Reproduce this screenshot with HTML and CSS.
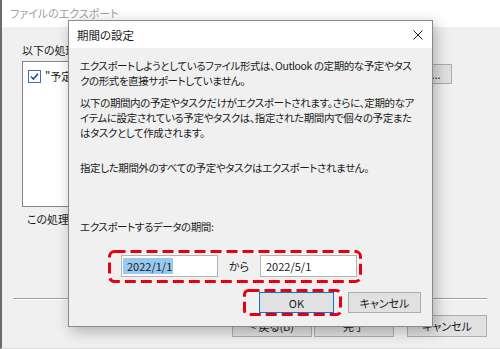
FILE: index.html
```html
<!DOCTYPE html>
<html lang="ja">
<head>
    <meta charset="UTF-8">
    <meta name="viewport" content="width=device-width, initial-scale=1.0">
    <title>期間の設定</title>
    <link rel="stylesheet" href="styles.css">
</head>
<body>
    <div class="window">
        <div class="win-title">ファイルのエクスポート</div>
        <div class="win-body">
            <div class="win-label">以下の処理</div>
            <div class="list-row">
                <div class="listbox">
                    <div class="list-item">
                        <svg class="check" width="13" height="13" viewBox="0 0 13 13">
                            <rect x="0.5" y="0.5" width="12" height="12" fill="#fff" stroke="#3c6fb8"/>
                            <path d="M3 6.5 L5.4 9 L10 3.8" fill="none" stroke="#1f4f96" stroke-width="1.6"/>
                        </svg>
                        <span>"予定表</span>
                    </div>
                </div>
                <button class="win-btn small">...</button>
            </div>
            <div class="win-note">この処理に</div>
            <div class="win-sep"></div>
            <div class="win-buttons">
                <button class="win-btn">&lt; 戻る(B)</button>
                <button class="win-btn">完了</button>
                <button class="win-btn cancel">キャンセル</button>
            </div>
        </div>
    </div>

    <div class="dialog">
        <div class="dlg-title">
            <span>期間の設定</span>
            <svg class="close" width="10" height="10" viewBox="0 0 10 10">
                <path d="M0.5 0.5 L9.5 9.5 M9.5 0.5 L0.5 9.5" stroke="#222" stroke-width="1"/>
            </svg>
        </div>
        <div class="dlg-body">
            <p class="msg">エクスポートしようとしているファイル形式は、Outlook の定期的な予定やタス<br>クの形式を直接サポートしていません。</p>
            <p class="msg second">以下の期間内の予定やタスクだけがエクスポートされます。さらに、定期的なア<br>イテムに設定されている予定やタスクは、指定された期間内で個々の予定また<br>はタスクとして作成されます。</p>
            <p class="msg third">指定した期間外のすべての予定やタスクはエクスポートされません。</p>
            <p class="msg range-label">エクスポートするデータの期間:</p>
            <div class="range-row">
                <div class="textbox"><span class="sel">2022/1/1</span></div>
                <span class="kara">から</span>
                <div class="textbox"><span class="val">2022/5/1</span></div>
                <svg class="mark mark-range" width="254" height="33" viewBox="0 0 254 33">
                    <rect x="1.5" y="1.5" width="251" height="30" rx="5" fill="none" stroke="#e60012" stroke-width="3" stroke-dasharray="11 5"/>
                </svg>
            </div>
            <div class="dlg-buttons">
                <span class="ok-wrap">
                    <button class="dlg-btn ok">OK</button>
                    <svg class="mark mark-ok" width="99" height="27" viewBox="0 0 99 27">
                        <rect x="1.5" y="1.5" width="96" height="24" rx="4" fill="none" stroke="#e60012" stroke-width="3" stroke-dasharray="11 5"/>
                    </svg>
                </span>
                <button class="dlg-btn">キャンセル</button>
            </div>
        </div>
    </div>
</body>
</html>
```

FILE: styles.css
```css
body {
    margin: 0;
    width: 500px;
    height: 349px;
    overflow: hidden;
    position: relative;
    font-family: "Noto Sans CJK JP", sans-serif;
    font-feature-settings: "palt";
    font-size: 11px;
    color: #1a1a1a;
}
button {
    font-family: inherit;
    font-feature-settings: "palt";
    font-size: 11px;
    color: #1a1a1a;
    padding: 0;
    cursor: default;
}
.window {
    height: 349px;
    box-sizing: border-box;
    border-left: 2px solid #6b6b6b;
    border-bottom: 1px solid #dcdcdc;
    background-color: #f0f0f0;
    display: flex;
    flex-direction: column;
}
.win-title {
    height: 27px;
    line-height: 27px;
    padding-left: 8px;
    background-color: #fff;
    color: #a0a0a0;
}
.win-body {
    flex: 1;
    padding: 16px 13px 0 11px;
}
.win-label {
    margin-left: 9px;
    line-height: 15px;
    white-space: nowrap;
}
.list-row {
    display: flex;
    gap: 8px;
    margin-top: 3px;
    padding-right: 35px;
}
.listbox {
    flex: 1;
    height: 146px;
    margin-left: 9px;
    background-color: #fff;
    border: 1px solid #828790;
    box-sizing: border-box;
}
.list-item {
    display: flex;
    align-items: center;
    gap: 4px;
    padding: 6px 0 0 5px;
    white-space: nowrap;
}
.check {
    display: block;
}
.win-btn {
    width: 80px;
    height: 22px;
    background-color: #e1e1e1;
    border: 1px solid #adadad;
}
.win-btn.small {
    width: 32px;
    height: 20px;
    margin-top: 3px;
}
.win-note {
    margin: 5px 0 0 14px;
    line-height: 15px;
    white-space: nowrap;
}
.win-sep {
    margin-top: 71px;
    border-top: 1px solid #a0a0a0;
    border-bottom: 1px solid #fff;
}
.win-buttons {
    display: flex;
    justify-content: flex-end;
    gap: 2px;
    margin-top: 15px;
}
.win-btn.cancel {
    margin-left: 11px;
}

.dialog {
    position: absolute;
    left: 68px;
    top: 20px;
    width: 365px;
    height: 307px;
    box-sizing: border-box;
    border: 1px solid #8a8a8a;
    background-color: #f0f0f0;
    box-shadow: 3px 4px 14px rgba(0, 0, 0, 0.28);
}
.dlg-title {
    height: 27px;
    display: flex;
    align-items: center;
    justify-content: space-between;
    padding: 0 9px 0 8px;
    background-color: #fff;
    font-size: 11.5px;
}
.close {
    display: block;
}
.dlg-body {
    padding: 10px 11px 0 11px;
}
.msg {
    margin: 0;
    font-size: 10.5px;
    letter-spacing: -0.4px;
    line-height: 15px;
    white-space: nowrap;
}
.msg.second {
    margin-top: 7px;
}
.msg.third {
    margin-top: 20px;
}
.msg.range-label {
    margin-top: 44px;
}
.range-row {
    position: relative;
    display: flex;
    align-items: center;
    margin: 21px 0 0 41px;
}
.textbox {
    width: 97px;
    height: 22px;
    box-sizing: border-box;
    padding-left: 1px;
    display: flex;
    align-items: center;
    background-color: #fff;
    border: 1px solid #b4b4b4;
}
.sel,
.val {
    padding: 0 1px 0 4px;
    line-height: 16px;
}
.sel {
    background-color: #99c9ef;
}
.kara {
    width: 42px;
    padding-left: 11px;
    box-sizing: border-box;
}
.mark {
    position: absolute;
    display: block;
    pointer-events: none;
}
.mark-range {
    left: -13px;
    top: -5px;
}
.dlg-buttons {
    display: flex;
    justify-content: flex-end;
    gap: 14px;
    margin-top: 15px;
}
.ok-wrap {
    position: relative;
    display: block;
}
.dlg-btn {
    display: block;
    width: 73px;
    height: 21px;
    background-color: #e1e1e1;
    border: 1px solid #adadad;
}
.dlg-btn.ok {
    width: 75px;
    border-color: #0078d7;
}
.mark-ok {
    left: -16px;
    top: -3px;
}
```
